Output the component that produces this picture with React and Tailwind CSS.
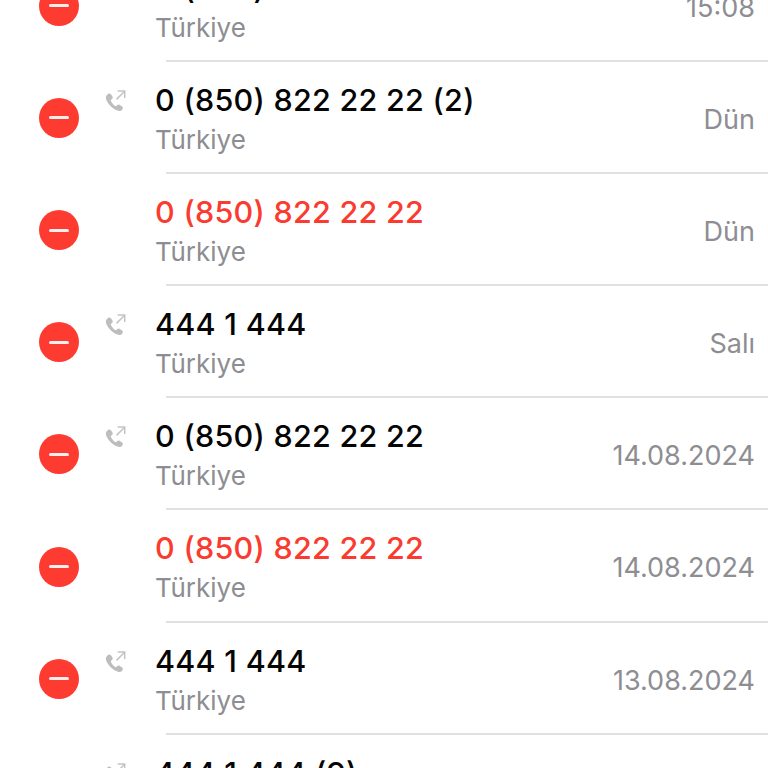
const rows = [
  { name: "0 (850) 822 22 22", date: "15:08", out: true },
  { name: "0 (850) 822 22 22 (2)", date: "Dün", out: true },
  { name: "0 (850) 822 22 22", date: "Dün", missed: true },
  { name: "444 1 444", date: "Salı", out: true },
  { name: "0 (850) 822 22 22", date: "14.08.2024", out: true },
  { name: "0 (850) 822 22 22", date: "14.08.2024", missed: true },
  { name: "444 1 444", date: "13.08.2024", out: true },
  { name: "444 1 444 (9)", date: "13.08.2024", out: true },
];

function OutIcon() {
  return (
    <svg width="24" height="24" viewBox="0 0 22 22" className="absolute left-[104px] top-[27px]">
      <path
        d="M3.6 4.600c1-.8 2-.6 2.700.3l1.400 2c.5.8.4 1.600-.3 2.200l-.9.8c-.3.3-.3.6-.2 1 .5 1.200 2.700 3.900 4 4.700.4.2.7.2 1-.1l.9-.8c.7-.6 1.500-.6 2.200-.1l2.200 1.500c.9.7 1 1.700.2 2.600-1 1.200-2.400 1.700-3.900 1.300C8 18.700 3 13.300 1.800 9c-.4-1.700.4-3.300 1.800-4.400z"
        fill="#bdbdc0"
      />
      <path d="M11.500 9.500 L18.700 2.300 M12.500 1.800 H19 V8.300" fill="none" stroke="#c4c4c6" strokeWidth="1.400" />
    </svg>
  );
}

function Row({ name, date, out, missed }) {
  return (
    <div className="relative h-[112.170px] shrink-0 flex items-center">
      <div className="ml-[39px] w-10 h-10 rounded-full bg-[#fe3b30] flex items-center justify-center shrink-0">
        <div className="w-5 h-[3px] rounded-full bg-[#fdeeee]" />
      </div>
      {out && <OutIcon />}
      <div className="ml-[76px] flex-1 flex flex-col self-start pt-[19px]">
        <div className={`text-[30.500px] leading-[37px] font-[550] tracking-[0.28px] ${missed ? "text-[#fb3a30]" : "text-[#050505]"}`}>
          {name}
        </div>
        <div className="text-[26px] leading-[36px] text-[#8d8d92] mt-[4px]">Türkiye</div>
      </div>
      <div className="absolute right-[13px] top-[40px] text-[27px] leading-[36px] text-[#8d8d92]">{date}</div>
      <div className="absolute left-[166px] right-0 bottom-0 h-[2px] bg-[#e1e1e3]" />
    </div>
  );
}

export default function App() {
  return (
    <div className="w-[768px] h-[768px] overflow-hidden bg-white font-['Inter',sans-serif]">
      <div className="flex flex-col mt-[-50.300px]">
        {rows.map((r, i) => (
          <Row key={i} {...r} />
        ))}
      </div>
    </div>
  );
}
